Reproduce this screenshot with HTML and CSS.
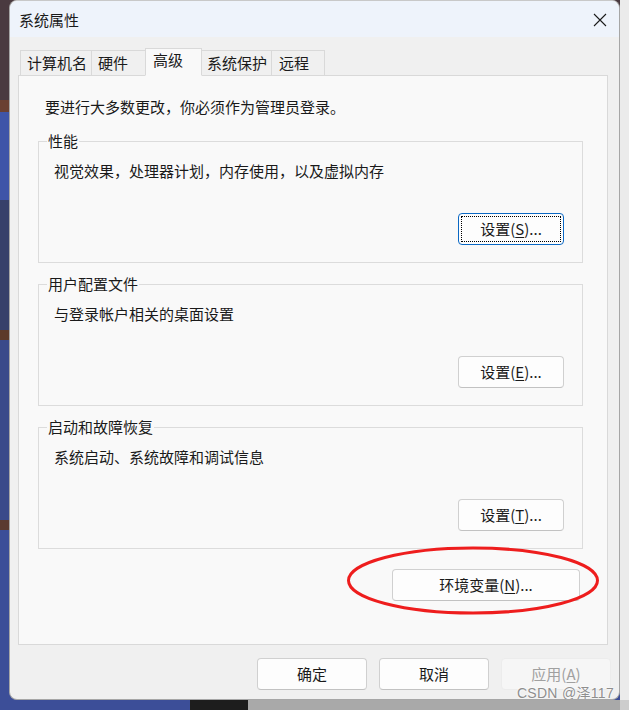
FILE: index.html
```html
<!DOCTYPE html>
<html lang="zh-CN">
<head>
<meta charset="utf-8">
<title>系统属性</title>
<link rel="stylesheet" href="styles.css">
</head>
<body>
<div class="desktop">
  <div class="window">
    <div class="titlebar">
      <span class="title">系统属性</span>
      <svg class="close" width="14" height="14" viewBox="0 0 14 14"><path d="M1 1 L13 13 M13 1 L1 13" stroke="#1b1b1b" stroke-width="1.1" fill="none"/></svg>
    </div>
    <div class="content">
      <div class="tabs">
        <div class="tab t1">计算机名</div>
        <div class="tab t2">硬件</div>
        <div class="tab selected">高级</div>
        <div class="tab t4">系统保护</div>
        <div class="tab t5">远程</div>
      </div>
      <div class="panel">
        <p class="intro">要进行大多数更改，你必须作为管理员登录。</p>
        <div class="group">
          <span class="legend">性能</span>
          <p class="desc">视觉效果，处理器计划，内存使用，以及虚拟内存</p>
          <div class="btnrow"><button class="btn focus">设置(<u>S</u>)...</button></div>
        </div>
        <div class="group">
          <span class="legend">用户配置文件</span>
          <p class="desc">与登录帐户相关的桌面设置</p>
          <div class="btnrow"><button class="btn">设置(<u>E</u>)...</button></div>
        </div>
        <div class="group">
          <span class="legend">启动和故障恢复</span>
          <p class="desc">系统启动、系统故障和调试信息</p>
          <div class="btnrow"><button class="btn">设置(<u>T</u>)...</button></div>
        </div>
        <div class="envrow"><button class="btn env">环境变量(<u>N</u>)...</button></div>
      </div>
      <div class="footer">
        <button class="btn foot">确定</button>
        <button class="btn foot">取消</button>
        <button class="btn foot disabled">应用(<u>A</u>)</button>
      </div>
    </div>
    <svg class="ellipse" width="254" height="70" viewBox="0 0 254 70"><ellipse cx="127" cy="34.5" rx="124.5" ry="32.5" fill="none" stroke="#ee1d1d" stroke-width="3"/></svg>
    <span class="watermark">CSDN @泽117</span>
  </div>
</div>
</body>
</html>
```

FILE: styles.css
```css
* { box-sizing: border-box; }
html, body { margin: 0; padding: 0; }
body {
  width: 629px;
  height: 710px;
  overflow: hidden;
  font-family: "Noto Sans CJK SC", "Noto Sans", sans-serif;
  font-size: 15px;
  color: #1a1a1a;
}
.desktop {
  width: 629px;
  height: 710px;
  padding-left: 9px;
  background:
    linear-gradient(#ebebeb, #ebebeb) right top / 9px 700px no-repeat,
    linear-gradient(to right, #3c4e98 0 190px, #1d1d1d 190px 248px, #a9a9a9 248px 620px, #cdcdcd 620px) left bottom / 100% 10px no-repeat,
    linear-gradient(to bottom, #4a3a40 0 100px, #6a4032 100px 112px, #3f55a8 112px 200px, #37406a 200px 330px, #5c3a2a 330px 340px, #3a4a8a 340px 520px, #5a3a30 520px 530px, #3c4e98 530px);
}
.window {
  position: relative;
  width: 611px;
  height: 700px;
  border: 1px solid #a6a6a6;
  border-top-color: #c8c8c8;
  border-radius: 8px;
  background: #f0f0f0;
  overflow: hidden;
  display: flex;
  flex-direction: column;
}
.titlebar {
  height: 36px;
  background: #eef3fb;
  display: flex;
  align-items: center;
  justify-content: space-between;
  padding: 0 12px 0 9px;
  flex: none;
}
.title { font-size: 15px; line-height: 20px; color: #1a1a1a; margin-top: 1px; }
.close { display: block; margin-top: 1px; }
.content {
  flex: 1;
  padding: 11px 11px 0 8px;
  display: flex;
  flex-direction: column;
}
.tabs {
  display: flex;
  align-items: flex-end;
  padding-left: 2px;
  margin-bottom: -1px;
  position: relative;
  z-index: 1;
  height: 28px;
}
.tab {
  height: 26px;
  border: 1px solid #d9d9d9;
  background: #f0f0f0;
  line-height: 24px;
  padding: 0 6px 0 6px;
  min-width: 54px;
  white-space: nowrap;
  margin-left: -1px;
}
.tab.t1 { margin-left: 0; width: 72px; }
.tab.t2 { width: 55px; }
.tab.t4 { width: 71px; padding-left: 5px; }
.tab.t5 { width: 53px; padding-left: 7px; }
.tab.selected {
  height: 28px;
  width: 57px;
  background: #f9f9f9;
  border-bottom-color: #f9f9f9;
  line-height: 22px;
  padding-left: 7px;
  position: relative;
  z-index: 2;
}
.panel {
  height: 570px;
  background: #f9f9f9;
  border: 1px solid #d9d9d9;
  padding: 21px 24px 0 19px;
  display: flex;
  flex-direction: column;
}
p { margin: 0; }
.intro { line-height: 20px; padding-left: 7px; }
.group {
  position: relative;
  margin-top: 24px;
  border: 1px solid #dcdcdc;
  padding: 19px 18px 17px 15px;
}
.group + .group { margin-top: 21px; }
.legend {
  position: absolute;
  left: 8px;
  top: -11px;
  line-height: 20px;
  background: #f9f9f9;
  padding: 0 1px;
}
.desc { line-height: 20px; }
.btnrow {
  display: flex;
  justify-content: flex-end;
  margin-top: 32px;
}
.btn {
  font-family: "Noto Sans CJK SC", "Noto Sans", sans-serif;
  font-size: 15px;
  color: #1a1a1a;
  height: 32px;
  width: 106px;
  background: #fdfdfd;
  border: 1px solid #d0d0d0;
  border-bottom-color: #c2c2c2;
  border-radius: 4px;
  padding: 0;
  line-height: 28px;
  display: block;
}
.btn u { text-underline-offset: 2px; text-decoration-thickness: 1px; }
.btn.focus {
  position: relative;
  border-color: #0a68c4;
}
.btn.focus::after {
  content: "";
  position: absolute;
  left: 2px; top: 2px; right: 2px; bottom: 2px;
  border: 1px dotted #000;
}
.envrow {
  display: flex;
  justify-content: flex-end;
  margin-top: 20px;
  padding-right: 3px;
}
.btn.env { width: 188px; }
.footer {
  display: flex;
  justify-content: flex-end;
  gap: 12px;
  margin-top: 13px;
  margin-right: -3px;
}
.btn.foot { width: 110px; }
.btn.disabled {
  background: #f6f6f6;
  border-color: #ececec;
  color: #a0a0a0;
}
.ellipse {
  position: absolute;
  left: 336px;
  top: 545px;
}
.watermark {
  position: absolute;
  right: 5px;
  bottom: -2px;
  font-family: "Liberation Sans", Arial, "Noto Sans CJK SC", sans-serif;
  font-size: 14px;
  line-height: 16px;
  color: #8e8e8e;
  text-shadow: 0 0 2px #fff, 0 0 2px #fff;
  letter-spacing: 0.3px;
}
```
